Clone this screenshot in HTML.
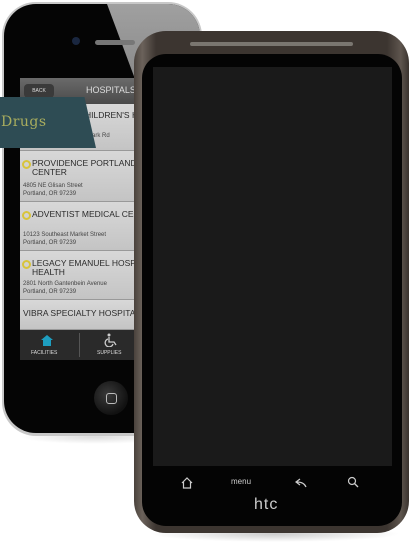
<!DOCTYPE html>
<html><head><style>
*{margin:0;padding:0;box-sizing:border-box}
body{width:412px;height:554px;background:#fff;position:relative;overflow:hidden;font-family:"Liberation Sans",sans-serif}
.a{position:absolute}
.row{position:absolute;left:20px;width:125px;background:linear-gradient(#d8d8d8,#c4c4c4);border-bottom:1px solid #999;color:#333;white-space:nowrap;overflow:hidden}
.t{font-size:8.5px;color:#2a2a2a;line-height:9px;padding-left:12px;position:relative}
.t:before{content:"";position:absolute;left:2px;top:1px;width:5px;height:5px;border:2px solid #d8c43a;border-radius:50%}
.ad{font-size:6px;color:#444;line-height:8px;padding-left:3px}
</style></head><body>
<div class="a" style="left:20px;top:430px;width:150px;height:14px;border-radius:50%;background:radial-gradient(#ddd,#fff 70%)"></div>
<div class="a" style="left:150px;top:526px;width:250px;height:16px;border-radius:50%;background:radial-gradient(#ccc,#fff 70%)"></div>
<!-- iPhone -->
<div class="a" style="left:2px;top:2px;width:200px;height:434px;border-radius:34px;background:#c8c8c8"></div>
<div class="a" style="left:4px;top:4px;width:196px;height:429px;border-radius:32px;background:#050505;overflow:hidden">
 <div class="a" style="left:103px;top:0;width:100px;height:75px;background:linear-gradient(#a0a0a0,#8a8a8a);clip-path:polygon(0 0,100% 0,100% 100%,28% 100%)"></div>
</div>
<div class="a" style="left:72px;top:37px;width:8px;height:8px;border-radius:50%;background:#1a2740"></div>
<div class="a" style="left:95px;top:40px;width:40px;height:5px;border-radius:3px;background:#777"></div>
<div class="a" style="left:20px;top:78px;width:125px;height:26px;background:linear-gradient(#6a6a6a,#4a4a4a)"></div>
<div class="a" style="left:24px;top:84px;width:30px;height:14px;border-radius:4px;background:#3a3a3a;color:#ddd;font-size:5px;line-height:14px;text-align:center">BACK</div>
<div class="a" style="left:86px;top:85px;color:#ddd;font-size:9px">HOSPITALS</div>
<div class="row" style="top:104px;height:47px"><div class="t" style="margin-top:7px;padding-left:65px">HILDREN'S HO</div><div class="ad" style="margin-top:12px;padding-left:68px">Park Rd</div></div>
<div class="row" style="top:151px;height:51px"><div class="t" style="margin-top:8px">PROVIDENCE PORTLAND M<br>CENTER</div><div class="ad" style="margin-top:5px">4805 NE Glisan Street<br>Portland, OR 97239</div></div>
<div class="row" style="top:202px;height:49px"><div class="t" style="margin-top:8px">ADVENTIST MEDICAL CENT</div><div class="ad" style="margin-top:12px">10123 Southeast Market Street<br>Portland, OR 97239</div></div>
<div class="row" style="top:251px;height:49px"><div class="t" style="margin-top:8px">LEGACY EMANUEL HOSPIT<br>HEALTH</div><div class="ad" style="margin-top:3px">2801 North Gantenbein Avenue<br>Portland, OR 97239</div></div>
<div class="row" style="top:300px;height:30px"><div style="font-size:8.5px;color:#2a2a2a;margin-top:8px;padding-left:3px">VIBRA SPECIALTY HOSPITAL</div></div>
<div class="a" style="left:20px;top:330px;width:125px;height:30px;background:#2a2a2a"></div>
<div class="a" style="left:79px;top:333px;width:1px;height:24px;background:#555"></div>
<svg class="a" style="left:40px;top:334px" width="14" height="13"><path d="M7 1L1 6h2v6h8V6h2z" fill="#1e9ec0"/></svg>
<div class="a" style="left:31px;top:350px;font-size:5px;color:#ddd">FACILITIES</div>
<svg class="a" style="left:104px;top:333px" width="14" height="14"><circle cx="5" cy="2" r="1.5" fill="#ccc"/><path d="M5 4v5h5l2 3M4 6a4 4 0 1 0 5 5" stroke="#ccc" fill="none" stroke-width="1.3"/></svg>
<div class="a" style="left:97px;top:350px;font-size:5px;color:#ddd">SUPPLIES</div>
<div class="a" style="left:94px;top:381px;width:34px;height:34px;border-radius:50%;background:radial-gradient(circle at 40% 40%,#3a3a3a,#111 70%)"></div>
<div class="a" style="left:106px;top:393px;width:11px;height:11px;border:1.5px solid #bbb;border-radius:3px"></div>
<div class="a" style="left:0;top:97px;width:96px;height:51px;background:#2e4c54;clip-path:polygon(0 0,88% 0,100% 100%,0 100%);color:#a9ad5e;font-family:'DejaVu Serif',serif;font-size:14px;line-height:51px;padding-left:1px;letter-spacing:0.5px">Drugs</div>
<!-- HTC -->
<div class="a" style="left:134px;top:31px;width:275px;height:502px;border-radius:32px;background:linear-gradient(90deg,#4a423c,#6b625b 3%,#3c3530 8%,#3c3530 92%,#5e554e 97%,#3a332e)"></div>
<div class="a" style="left:142px;top:54px;width:260px;height:472px;border-radius:24px;background:#040404"></div>
<div class="a" style="left:190px;top:42px;width:163px;height:4px;border-radius:2px;background:#7a7670"></div>
<div class="a" style="left:153px;top:67px;width:239px;height:399px;background:#1a1a1a"></div>
<svg class="a" style="left:180px;top:476px" width="14" height="14"><path d="M2 7L7 2l5 5M3.5 6v6h7V6" stroke="#ccc" fill="none" stroke-width="1.2"/></svg>
<div class="a" style="left:231px;top:477px;font-size:8px;color:#ccc">menu</div>
<svg class="a" style="left:294px;top:477px" width="14" height="12"><path d="M12 10Q10 5 3 5M6 2L2 5l4 3" stroke="#ccc" fill="none" stroke-width="1.2"/></svg>
<svg class="a" style="left:347px;top:476px" width="12" height="12"><circle cx="5" cy="5" r="3.5" stroke="#ccc" fill="none" stroke-width="1.2"/><path d="M7.5 7.5L11 11" stroke="#ccc" stroke-width="1.3"/></svg>
<div class="a" style="left:254px;top:496px;font-size:16px;color:#ccc;letter-spacing:1px">htc</div>
</body></html>
